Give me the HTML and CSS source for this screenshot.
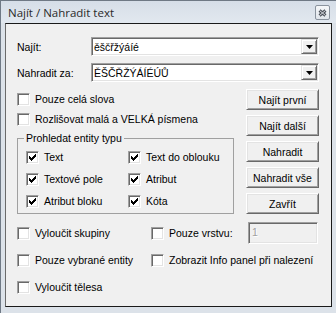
FILE: index.html
```html
<!DOCTYPE html>
<html lang="cs">
<head>
<meta charset="utf-8">
<title>Najít / Nahradit text</title>
<link rel="stylesheet" href="styles.css">
</head>
<body>
<div class="window">
  <div class="titlebar">
    <span class="title">Najít / Nahradit text</span>
    <span class="close">
      <svg width="9" height="8" viewBox="0 0 9 8" aria-hidden="true">
        <path d="M1.5 1.5 L7.5 6.5 M7.5 1.5 L1.5 6.5" stroke="#4b5059" stroke-width="3" fill="none"/>
        <path d="M1.5 1.5 L7.5 6.5 M7.5 1.5 L1.5 6.5" stroke="#d4d8de" stroke-width="1" fill="none"/>
      </svg>
    </span>
  </div>
  <div class="content">
    <div class="field-row">
      <span class="field-label">Najít:</span>
      <div class="combo">
        <span class="combo-text">ěščřžýáíé</span>
        <span class="combo-btn"><svg width="7" height="4" viewBox="0 0 7 4"><path d="M0 0H7L3.5 4Z" fill="#000"/></svg></span>
      </div>
    </div>
    <div class="field-row">
      <span class="field-label">Nahradit za:</span>
      <div class="combo">
        <span class="combo-text">ĚŠČŘŽÝÁÍÉÚŮ</span>
        <span class="combo-btn"><svg width="7" height="4" viewBox="0 0 7 4"><path d="M0 0H7L3.5 4Z" fill="#000"/></svg></span>
      </div>
    </div>

    <div class="main">
      <div class="options">
        <div class="check-row"><span class="cb"></span><span>Pouze celá slova</span></div>
        <div class="check-row"><span class="cb"></span><span>Rozlišovat malá a VELKÁ písmena</span></div>
        <fieldset class="group">
          <legend>Prohledat entity typu</legend>
          <div class="group-grid">
            <div class="check-row tall"><span class="cb checked"><svg width="7" height="7" viewBox="0 0 7 7"><path d="M0 2h1v3H0zM1 3h1v3H1zM2 4h1v3H2zM3 3h1v3H3zM4 2h1v3H4zM5 1h1v3H5zM6 0h1v3H6z" fill="#000"/></svg></span><span>Text</span></div>
            <div class="check-row tall"><span class="cb checked"><svg width="7" height="7" viewBox="0 0 7 7"><path d="M0 2h1v3H0zM1 3h1v3H1zM2 4h1v3H2zM3 3h1v3H3zM4 2h1v3H4zM5 1h1v3H5zM6 0h1v3H6z" fill="#000"/></svg></span><span>Text do oblouku</span></div>
            <div class="check-row tall"><span class="cb checked"><svg width="7" height="7" viewBox="0 0 7 7"><path d="M0 2h1v3H0zM1 3h1v3H1zM2 4h1v3H2zM3 3h1v3H3zM4 2h1v3H4zM5 1h1v3H5zM6 0h1v3H6z" fill="#000"/></svg></span><span>Textové pole</span></div>
            <div class="check-row tall"><span class="cb checked"><svg width="7" height="7" viewBox="0 0 7 7"><path d="M0 2h1v3H0zM1 3h1v3H1zM2 4h1v3H2zM3 3h1v3H3zM4 2h1v3H4zM5 1h1v3H5zM6 0h1v3H6z" fill="#000"/></svg></span><span>Atribut</span></div>
            <div class="check-row tall"><span class="cb checked"><svg width="7" height="7" viewBox="0 0 7 7"><path d="M0 2h1v3H0zM1 3h1v3H1zM2 4h1v3H2zM3 3h1v3H3zM4 2h1v3H4zM5 1h1v3H5zM6 0h1v3H6z" fill="#000"/></svg></span><span>Atribut bloku</span></div>
            <div class="check-row tall"><span class="cb checked"><svg width="7" height="7" viewBox="0 0 7 7"><path d="M0 2h1v3H0zM1 3h1v3H1zM2 4h1v3H2zM3 3h1v3H3zM4 2h1v3H4zM5 1h1v3H5zM6 0h1v3H6z" fill="#000"/></svg></span><span>Kóta</span></div>
          </div>
        </fieldset>
      </div>
      <div class="buttons">
        <div class="btn">Najít první</div>
        <div class="btn">Najít další</div>
        <div class="btn">Nahradit</div>
        <div class="btn">Nahradit vše</div>
        <div class="btn">Zavřít</div>
      </div>
    </div>

    <div class="bottom">
      <div class="check-row"><span class="cb"></span><span>Vyloučit skupiny</span></div>
      <div class="check-row"><span class="cb"></span><span>Pouze vrstvu:</span><span class="input-disabled">1</span></div>
      <div class="check-row"><span class="cb"></span><span>Pouze vybrané entity</span></div>
      <div class="check-row"><span class="cb"></span><span>Zobrazit Info panel při nalezení</span></div>
      <div class="check-row"><span class="cb"></span><span>Vyloučit tělesa</span></div>
    </div>
  </div>
</div>
</body>
</html>
```

FILE: styles.css
```css
* { box-sizing: border-box; }

html, body {
  margin: 0;
  padding: 0;
}

body {
  background: #dde3ea;
  font-family: "Liberation Sans", Arial, sans-serif;
  font-size: 10.5px;
  color: #000;
}

.window {
  width: 336px;
  height: 313px;
  background: #dce2e9;
  border-top: 1px solid #6f7985;
  border-left: 1px solid #6f7985;
  padding: 0 4px 6px 4px;
  display: flex;
  flex-direction: column;
  overflow: hidden;
}

.titlebar {
  height: 22px;
  flex: none;
  margin: 0 -4px;
  padding: 0 6px 0 7px;
  display: flex;
  justify-content: space-between;
  align-items: flex-start;
  background: linear-gradient(#d6dee8, #e2e8ef);
}

.title {
  font-family: "Open Sans", "Liberation Sans", sans-serif;
  font-size: 11.5px;
  line-height: 16px;
  margin-top: 4px;
  color: #2a2a2a;
}

.close {
  width: 15px;
  height: 15px;
  margin-top: 4px;
  border: 1px solid #8a939e;
  border-radius: 2px;
  background: linear-gradient(#f5f7f9, #e0e5eb);
  display: flex;
  align-items: center;
  justify-content: center;
}

.content {
  flex: 1;
  background: #f0f0f0;
  border: 1px solid #1a1a1a;
  border-left-color: #6a6a6a;
  padding: 12px 11px 0 11px;
}

.field-row {
  display: flex;
  align-items: center;
  height: 19px;
  margin-bottom: 7px;
}

.field-row:first-child {
  margin-top: 1px;
}

.field-label {
  width: 74px;
  flex: none;
}

.combo {
  width: 228px;
  height: 19px;
  display: flex;
  align-items: center;
  padding: 1px 1px 1px 1px;
  background: #fff;
  border: 1px solid;
  border-color: #a0a0a0 #ffffff #ffffff #a0a0a0;
  box-shadow: inset 1px 1px #696969, inset -1px -1px #e3e3e3;
}

.combo-text {
  padding-left: 1px;
  font-size: 10.5px;
  color: #000;
}

.combo-btn {
  margin-left: auto;
  width: 16px;
  height: 15px;
  display: flex;
  align-items: center;
  justify-content: center;
  background: #f0f0f0;
  border: 1px solid;
  border-color: #e3e3e3 #696969 #696969 #e3e3e3;
  box-shadow: inset 1px 1px #fff, inset -1px -1px #a0a0a0;
}

.main {
  display: grid;
  grid-template-columns: 217px 73px;
  column-gap: 12px;
}

.options {
  display: flex;
  flex-direction: column;
}

.check-row {
  display: flex;
  align-items: center;
  gap: 5px;
  height: 20px;
  white-space: nowrap;
}

.check-row.tall {
  height: 22px;
}

.cb {
  width: 13px;
  height: 13px;
  flex: none;
  background: #fff;
  border: 1px solid;
  border-color: #a0a0a0 #ffffff #ffffff #a0a0a0;
  box-shadow: inset 1px 1px #696969, inset -1px -1px #e3e3e3;
  display: flex;
  align-items: center;
  justify-content: center;
}

.cb svg {
  display: block;
}

.group {
  margin: 3px 0 0 0;
  padding: 0 0 1px 0;
  border: 1px solid #a0a0a0;
  min-width: 0;
}

.group legend {
  margin-left: 6px;
  padding: 0 2px;
  line-height: 13px;
}

.group-grid {
  display: grid;
  grid-template-columns: 102px 1fr;
  padding: 1px 0 0 8px;
}

.buttons {
  display: flex;
  flex-direction: column;
  gap: 5px;
}

.btn {
  height: 21px;
  display: flex;
  align-items: center;
  justify-content: center;
  background: #f0f0f0;
  border: 1px solid;
  border-color: #ffffff #696969 #696969 #ffffff;
  box-shadow: inset 1px 1px #e3e3e3, inset -1px -1px #a0a0a0;
}

.bottom {
  margin-top: 6px;
  display: grid;
  grid-template-columns: 134px 1fr;
  grid-auto-rows: 26px;
  row-gap: 1px;
}

.bottom .check-row {
  height: 26px;
}

.input-disabled {
  margin-left: auto;
  margin-right: 2px;
  width: 70px;
  height: 22px;
  padding: 3px 0 0 3px;
  color: #a0a0a0;
  text-shadow: 1px 1px #fff;
  background: #f0f0f0;
  border: 1px solid;
  border-color: #a0a0a0 #ffffff #ffffff #a0a0a0;
  box-shadow: inset 1px 1px #696969, inset -1px -1px #e3e3e3;
}
```
